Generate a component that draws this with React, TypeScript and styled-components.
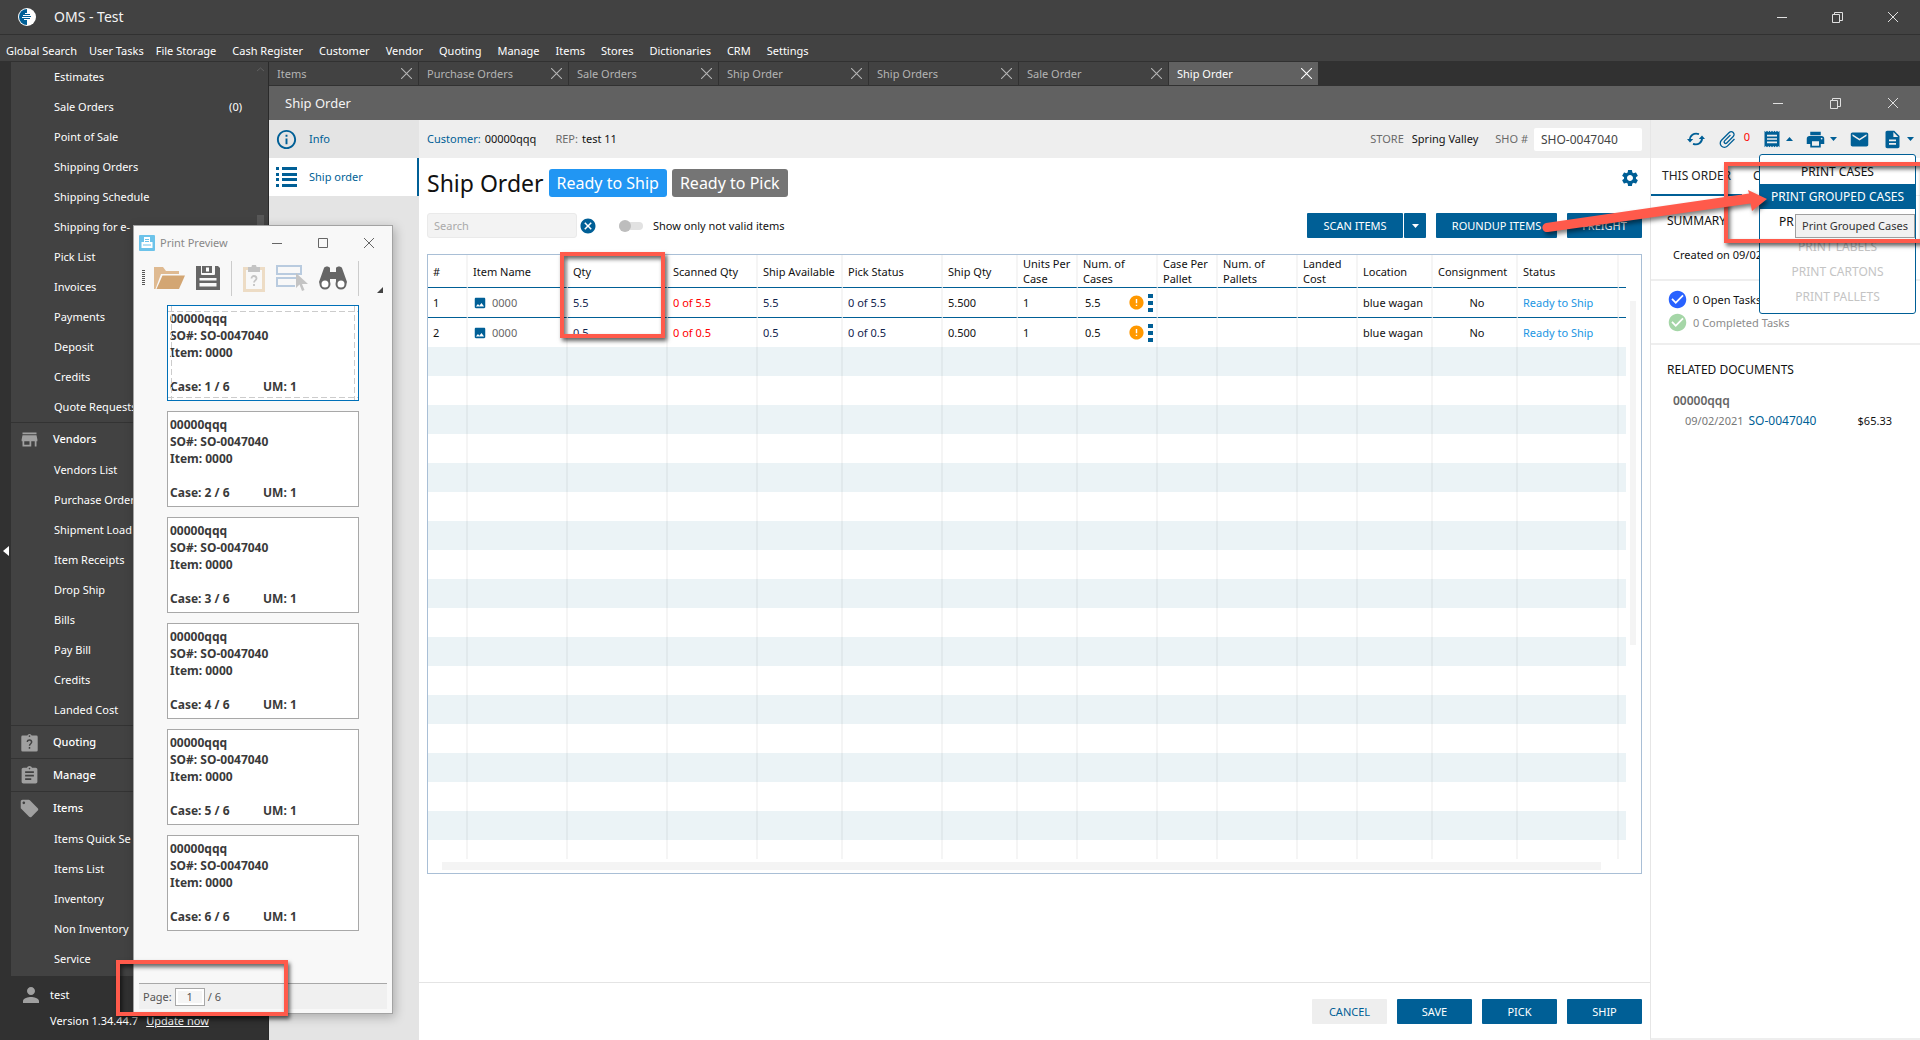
import React from "react";
import styled, { createGlobalStyle, css } from "styled-components";
import {
  MdStore,
  MdAssignment,
  MdPerson,
  MdSettings,
  MdReceipt,
  MdPrint,
  MdEmail,
  MdDescription,
  MdLocalOffer,
  MdImage,
  MdError,
  MdCheckCircle,
  MdOutlineInfo,
  MdAttachFile,
  MdCancel,
} from "react-icons/md";

const blue = "#005f96";
const red = "#ff5a4b";

const GlobalStyle = createGlobalStyle`
  * { box-sizing: border-box; }
  body {
    margin: 0;
    background: #313131;
    font-family: "Noto Sans", "Open Sans", sans-serif;
    font-size: 11px;
    line-height: 16px;
    color: #111;
  }
  button, input { font: inherit; color: inherit; margin: 0; }
  button { background: none; border: 0; padding: 0; cursor: pointer; }
  a { color: inherit; text-decoration: none; }
  ul { list-style: none; margin: 0; padding: 0; }
  h1, h2, p { margin: 0; font-weight: 400; }
  svg { display: block; flex: none; }
`;

/* ---------- shell ---------- */

const Page = styled.div`
  position: relative;
  display: flex;
  flex-direction: column;
  height: 100vh;
  overflow: hidden;
`;

const TitleBar = styled.header`
  display: flex;
  align-items: center;
  flex: none;
  height: 35px;
  padding: 0 22px 0 17px;
  gap: 17px;
  background: #424242;
  border-bottom: 1px solid #313131;
  color: #f4f4f4;
  font-size: 14px;
`;

const WindowControls = styled.div<{ $gap: number; $color: string }>`
  display: flex;
  align-items: center;
  gap: ${(p) => p.$gap}px;
  margin-left: auto;
  color: ${(p) => p.$color};
`;

const IconButton = styled.button`
  display: flex;
  align-items: center;
  justify-content: center;
`;

const MenuBar = styled.nav`
  display: flex;
  align-items: center;
  flex: none;
  height: 27px;
  padding: 6px 6px 0;
  gap: 16px;
  background: #424242;
  border-bottom: 1px solid #313131;
  color: #fff;
`;

const MenuItem = styled.a<{ $tight?: boolean }>`
  margin-right: ${(p) => (p.$tight ? "-4px" : "0")};
`;

const Body = styled.div`
  display: flex;
  flex: 1;
  min-height: 0;
`;

const CollapseStrip = styled.button`
  display: flex;
  align-items: center;
  justify-content: center;
  width: 11px;
  background: #313131;
`;

const Sidebar = styled.aside`
  display: flex;
  flex-direction: column;
  width: 258px;
  flex: none;
  background: #313131;
  border-right: 1px solid #2a2a2a;
  color: #fff;
`;

const SideScroll = styled.nav`
  position: relative;
  background: #424242;
  padding-bottom: 2px;
`;

const SideLink = styled.a`
  display: flex;
  align-items: center;
  justify-content: space-between;
  height: 30px;
  padding: 0 26px 0 43px;
`;

const SideGroup = styled.a`
  display: flex;
  align-items: center;
  gap: 13px;
  height: 33px;
  padding-left: 8px;
  border-top: 1px solid #333;
  font-weight: 500;
  svg { color: #a0a0a0; }
`;

const SideThumb = styled.i`
  position: absolute;
  right: 4px;
  top: 153px;
  width: 7px;
  height: 120px;
  background: #575757;
`;

const SideArrow = styled.svg`
  position: absolute;
  right: 4px;
  top: 5px;
`;

const UserArea = styled.div`
  display: grid;
  grid-template-columns: 22px 1fr;
  column-gap: 9px;
  row-gap: 2px;
  align-items: center;
  padding: 7px 8px 0;
  svg { color: #a0a0a0; }
`;

const VersionLine = styled.div`
  grid-column: 2;
  display: flex;
  gap: 8px;
  line-height: 24px;
  a { text-decoration: underline; }
`;

const Workspace = styled.div`
  display: flex;
  flex-direction: column;
  flex: 1;
  min-width: 0;
`;

const TabStrip = styled.div`
  display: flex;
  height: 24px;
  flex: none;
  background: #313131;
  border-bottom: 1px solid #313131;
`;

const DocTab = styled.div<{ $active?: boolean }>`
  display: flex;
  align-items: center;
  justify-content: space-between;
  width: 150px;
  padding: 0 6px 0 8px;
  border-right: 1px solid #313131;
  background: ${(p) => (p.$active ? "#616161" : "#424242")};
  color: ${(p) => (p.$active ? "#fff" : "#b4b4b4")};
`;

const DocTitle = styled.div`
  display: flex;
  align-items: center;
  flex: none;
  height: 34px;
  padding: 0 22px 0 16px;
  background: #616161;
  color: #f4f4f4;
  font-size: 13px;
`;

const Content = styled.div`
  display: grid;
  grid-template-columns: 150px minmax(0, 1fr) 270px;
  flex: 1;
  min-height: 0;
`;

const Sections = styled.nav`
  background: #e4e4e4;
`;

const SectionLink = styled.a<{ $active?: boolean }>`
  display: flex;
  align-items: center;
  gap: 11px;
  height: 38px;
  padding-left: 6px;
  color: ${blue};
  ${(p) => p.$active && css`
    background: #fff;
    border-right: 2px solid ${blue};
  `}
`;

/* ---------- main form ---------- */

const Main = styled.main`
  display: flex;
  flex-direction: column;
  background: #fff;
`;

const InfoBar = styled.div`
  display: flex;
  align-items: center;
  flex: none;
  height: 38px;
  padding: 0 8px;
  background: #eee;
`;

const Pair = styled.div<{ $blue?: boolean }>`
  display: flex;
  gap: 4px;
  margin-right: 19px;
  span { color: ${(p) => (p.$blue ? blue : "#6a6a6a")}; }
`;

const StorePair = styled(Pair)`
  gap: 8px;
  margin: 0 17px 0 auto;
`;

const NumberField = styled.label`
  display: flex;
  align-items: center;
  gap: 6px;
  color: #6a6a6a;
  input {
    width: 108px;
    height: 23px;
    padding: 0 7px;
    border: 0;
    border-radius: 2px;
    background: #fff;
    font-size: 12px;
    color: #444;
  }
`;

const HeadingRow = styled.div`
  display: flex;
  align-items: center;
  height: 50px;
  padding: 0 10px 0 8px;
  gap: 5px;
  button { margin-left: auto; color: ${blue}; align-self: flex-start; margin-top: 10px; }
`;

const Heading = styled.h1`
  font-size: 23px;
  line-height: 32px;
`;

const Badge = styled.span<{ $color: string }>`
  padding: 0 8px;
  border-radius: 3px;
  background: ${(p) => p.$color};
  color: #fff;
  font-size: 16px;
  line-height: 28px;
`;

const ToolRow = styled.div`
  display: flex;
  align-items: center;
  height: 25px;
  margin: 5px 8px 16px;
`;

const SearchBox = styled.input`
  width: 150px;
  height: 25px;
  padding: 0 6px;
  border: 1px solid #eaeaea;
  border-radius: 3px;
  background: #f3f3f3;
  &::placeholder { color: #aaa; }
`;

const ClearButton = styled(IconButton)`
  margin: 0 22px 0 2px;
  color: ${blue};
`;

const SwitchLabel = styled.label`
  display: flex;
  align-items: center;
  gap: 10px;
  input {
    appearance: none;
    position: relative;
    width: 24px;
    height: 8px;
    border-radius: 4px;
    background: #e2e2e2;
  }
  input::before {
    content: "";
    position: absolute;
    left: 0;
    top: -2px;
    width: 12px;
    height: 12px;
    border-radius: 50%;
    background: #bdbdbd;
  }
`;

const ActionGroup = styled.div`
  display: flex;
  gap: 10px;
  margin-left: auto;
`;

const SplitButton = styled.div`
  display: flex;
  gap: 1px;
`;

const Button = styled.button<{ $width: number; $plain?: boolean }>`
  display: flex;
  align-items: center;
  justify-content: center;
  width: ${(p) => p.$width}px;
  height: 25px;
  border-radius: 1px;
  background: ${(p) => (p.$plain ? "#eee" : blue)};
  color: ${(p) => (p.$plain ? blue : "#fff")};
`;

const GridFrame = styled.section`
  display: flex;
  flex-direction: column;
  margin: 0 8px;
  height: 620px;
  border: 1px solid #a9bfd6;
`;

const GridArea = styled.div`
  display: flex;
  flex: 1;
  min-height: 0;
  overflow: hidden;
`;

const Grid = styled.table`
  flex: 1;
  table-layout: fixed;
  border-spacing: 0;
  th, td {
    padding: 0 0 0 5px;
    border-right: 2px solid rgba(0, 0, 0, 0.04);
    text-align: left;
    font-weight: 400;
    white-space: nowrap;
  }
  th { height: 33px; line-height: 15px; border-bottom: 1px solid ${blue}; }
  th:last-child, td:last-child { border-right: 0; padding: 0; }
`;

const Row = styled.tr<{ $selected?: boolean; $striped?: boolean }>`
  background: ${(p) => (p.$striped ? "#ebf3f6" : "#fff")};
  td {
    height: ${(p) => (p.$selected ? 30 : 29)}px;
    border-bottom: ${(p) => (p.$selected ? `1px solid ${blue}` : "0")};
  }
`;

const Value = styled.span<{ $tone?: string }>`
  color: ${(p) => p.$tone || "#111"};
`;

const ItemCell = styled.span`
  display: flex;
  align-items: center;
  gap: 5px;
  color: #666;
  svg { color: ${blue}; }
`;

const CasesCell = styled.span`
  display: flex;
  align-items: center;
  gap: 3px;
  padding: 0 3px 0 2px;
  svg:first-of-type { margin-left: auto; }
`;

const Centered = styled.span`
  display: block;
  text-align: center;
`;

const VScroll = styled.div`
  width: 15px;
  padding: 46px 5px 0 4px;
  i { display: block; height: 344px; background: #f4f4f4; }
`;

const HScroll = styled.div`
  flex: none;
  height: 14px;
  padding: 3px 40px 0 14px;
  i { display: block; height: 8px; background: #f4f4f4; }
`;

const Footer = styled.footer`
  display: flex;
  justify-content: flex-end;
  align-items: center;
  gap: 10px;
  height: 58px;
  margin-top: auto;
  padding: 0 8px;
  border-top: 1px solid #e4e4e4;
`;

/* ---------- right panel ---------- */

const Panel = styled.aside`
  display: flex;
  flex-direction: column;
  background: #fff;
  border-left: 1px solid #e6e6e6;
  border-bottom: 2px solid #eee;
`;

const PanelTools = styled.div`
  display: flex;
  align-items: center;
  justify-content: flex-end;
  height: 38px;
  flex: none;
  padding-right: 6px;
  gap: 12px;
  background: #eee;
  color: ${blue};
`;

const ToolButton = styled(IconButton)`
  gap: 4px;
  height: 38px;
  sup { color: #f00; font-size: 11px; line-height: 16px; align-self: flex-start; margin: 9px 0 0 2px; }
`;

const MenuHost = styled.div`
  position: relative;
`;

const DropMenu = styled.ul`
  position: absolute;
  left: -3px;
  top: 34px;
  z-index: 5;
  width: 157px;
  padding: 4px 0;
  border: 1px solid ${blue};
  border-radius: 3px;
  background: #fff;
`;

const DropItem = styled.button<{ $active?: boolean; $left?: boolean }>`
  display: block;
  width: 100%;
  height: 25px;
  padding: ${(p) => (p.$left ? "0 19px" : "0")};
  text-align: ${(p) => (p.$left ? "left" : "center")};
  font-size: 12px;
  color: ${(p) => (p.$active ? "#fff" : "#111")};
  background: ${(p) => (p.$active ? blue : "none")};
  &:disabled { color: #c4c4c4; }
`;

const Tooltip = styled.li`
  position: absolute;
  right: 0;
  top: 59px;
  padding: 3px 6px;
  border: 1px solid #a0a0a0;
  background: #f1f1f1;
  white-space: nowrap;
  color: #333;
`;

const PanelTabs = styled.div`
  display: flex;
  height: 38px;
  flex: none;
  border-bottom: 1px solid #eee;
`;

const PanelTab = styled.button<{ $active?: boolean }>`
  height: 38px;
  padding: 0 11px;
  font-size: 12px;
  color: #222;
  border-bottom: 2px solid ${(p) => (p.$active ? blue : "transparent")};
`;

const Block = styled.section<{ $pad: string }>`
  padding: ${(p) => p.$pad};
  border-bottom: 2px solid #eee;
  &:last-child { border-bottom: 0; }
`;

const BlockTitle = styled.h2`
  font-size: 12px;
  line-height: 18px;
`;

const Created = styled.p`
  padding: 16px 0 0 6px;
  line-height: 18px;
`;

const Task = styled.div<{ $tone: string; $muted?: boolean }>`
  display: flex;
  align-items: center;
  gap: 5px;
  height: 23px;
  color: ${(p) => (p.$muted ? "#8c8c8c" : "#111")};
  svg { color: ${(p) => p.$tone}; }
`;

const DocOwner = styled.p`
  padding: 13px 0 2px 6px;
  font-size: 12px;
  font-weight: 600;
  line-height: 18px;
  color: #666;
`;

const DocLine = styled.div`
  display: flex;
  gap: 5px;
  padding: 0 28px 0 18px;
  line-height: 18px;
  span:first-child { color: #777; }
  a { color: ${blue}; font-size: 12px; }
  span:last-child { margin-left: auto; }
`;

/* ---------- print preview window ---------- */

const Preview = styled.div`
  position: absolute;
  left: 133px;
  top: 225px;
  z-index: 10;
  display: flex;
  flex-direction: column;
  width: 260px;
  height: 789px;
  border: 1px solid #a3a3a3;
  background: #f8f8f8;
  box-shadow: 2px 3px 10px rgba(0, 0, 0, 0.25);
`;

const PreviewTitle = styled.div`
  display: flex;
  align-items: center;
  height: 34px;
  padding: 0 18px 0 5px;
  gap: 5px;
  color: #888;
`;

const PreviewTools = styled.div`
  display: flex;
  align-items: center;
  height: 36px;
  padding-left: 8px;
  gap: 11px;
`;

const ToolSep = styled.i`
  width: 1px;
  height: 35px;
  background: #ccc;
`;

const Grip = styled.i`
  width: 3px;
  height: 16px;
  margin-right: -2px;
  background: repeating-linear-gradient(#555 0 1px, transparent 1px 2px);
`;

const Corner = styled.i`
  width: 0;
  margin-top: 23px;
  margin-left: auto;
  margin-right: 9px;
  border-left: 6px solid transparent;
  border-bottom: 6px solid #444;
`;

const Cards = styled.div`
  display: flex;
  flex-direction: column;
  gap: 10px;
  padding: 9px 33px 0 33px;
`;

const Card = styled.article<{ $selected?: boolean }>`
  position: relative;
  height: 96px;
  padding: 4px 2px;
  border: 1px solid ${(p) => (p.$selected ? "#0070b8" : "#a8a8a8")};
  background: #fff;
  font-size: 12px;
  font-weight: 700;
  line-height: 17px;
  color: #3a3a3a;
`;

const CardFoot = styled.div`
  display: grid;
  grid-template-columns: 93px 1fr;
  margin-top: 17px;
`;

const MarginOverlay = styled.svg`
  position: absolute;
  inset: 0;
`;

const StatusBar = styled.label`
  display: flex;
  align-items: center;
  gap: 3px;
  height: 26px;
  margin: auto 5px 4px;
  padding-left: 4px;
  border-top: 1px solid #a8a8a8;
  background: #f0f0f0;
  color: #555;
  input {
    width: 30px;
    height: 18px;
    padding: 0;
    border: 1px solid #a8a8a8;
    background: #f5f5f5;
    box-shadow: inset 0 0 0 2px #fff;
    text-align: center;
  }
`;

/* ---------- annotations ---------- */

const Marker = styled.div<{ $x: number; $y: number; $w: number; $h: number }>`
  position: absolute;
  left: ${(p) => p.$x}px;
  top: ${(p) => p.$y}px;
  z-index: 20;
  width: ${(p) => p.$w}px;
  height: ${(p) => p.$h}px;
  border: 4px solid ${red};
  box-shadow: 2px 3px 4px rgba(0, 0, 0, 0.6), inset 2px 3px 4px rgba(0, 0, 0, 0.6);
  pointer-events: none;
`;

const ArrowMark = styled.svg`
  position: absolute;
  left: 1540px;
  top: 184px;
  z-index: 21;
  filter: drop-shadow(2px 3px 2px rgba(0, 0, 0, 0.5));
  pointer-events: none;
`;

/* ---------- drawings ---------- */

const Cross = ({ size = 10 }: { size?: number }) => (
  <svg width={size} height={size} viewBox="0 0 10 10" fill="none" stroke="currentColor">
    <path d="M0 0 10 10M10 0 0 10" />
  </svg>
);
const Dash = () => (
  <svg width="10" height="10" viewBox="0 0 10 10"><path d="M0 5.5h10" stroke="currentColor" /></svg>
);
const Restore = () => (
  <svg width="11" height="11" viewBox="0 0 11 11" fill="none" stroke="currentColor">
    <path d="M.5 2.5h7v8h-7zM2.5 2.500V.5h8v8h-2.500" />
  </svg>
);
const Square = () => (
  <svg width="10" height="10" viewBox="0 0 10 10"><path d="M.5.5h9v9h-9z" fill="none" stroke="currentColor" /></svg>
);
const Caret = ({ up }: { up?: boolean }) => (
  <svg width="7" height="4" viewBox="0 0 7 4" fill="currentColor">
    <path d={up ? "M0 4 3.500 0 7 4z" : "M0 0h7L3.500 4z"} />
  </svg>
);
const Logo = () => (
  <svg width="20" height="20" viewBox="0 0 20 20">
    <circle cx="10" cy="10" r="9" fill="#fff" />
    <path d="M10 2a8 8 0 0 0 0 16z" fill={blue} />
    <path d="M6 8.500h4M5 10.500h5M7 12.500h3M8 6.500h2" stroke="#fff" />
    <path d="M10 7.500h3M10 9.500h4M10 11.500h3" stroke={blue} />
  </svg>
);
const ListIcon = () => (
  <svg width="23" height="20" viewBox="0 0 23 20" fill={blue}>
    {[0, 6, 11, 17].map((y) => (
      <path key={y} d={`M1 ${y}h3v3H1zM7 ${y}h15v3H7z`} />
    ))}
  </svg>
);
const ClipQuestion = ({ size, width, board, ink }: { size: number; width: number; board: string; ink: string }) => (
  <svg width={width} height={size} viewBox="0 0 20 22">
    <path d="M2 3h5.500a2.600 2.600 0 0 1 5 0H18a1.500 1.500 0 0 1 1.500 1.500V20a1.500 1.500 0 0 1-1.500 1.500H2A1.500 1.500 0 0 1 .5 20V4.500A1.500 1.500 0 0 1 2 3z" fill={board} />
    <circle cx="10" cy="3.500" r="1" fill={ink} />
    <path d="M7.500 10.500c0-3.500 5-3.200 5 0 0 1.800-2.500 2-2.500 4.200M10 16.200v2" fill="none" stroke={ink} strokeWidth="1.700" />
  </svg>
);
const Refresh = () => (
  <svg width="18" height="16" viewBox="0 0 18 16" fill="none" stroke="currentColor" strokeWidth="1.800">
    <path d="M3 9.500C2.500 4.500 7 1.500 12 3.200M15 6.500c.5 5-4 8-9 6.300" />
    <path d="M0 8h6.200L3 11.500zM18 8h-6.200L15 4.500z" fill="currentColor" stroke="none" />
  </svg>
);
const Dots = () => (
  <svg width="5" height="18" viewBox="0 0 5 18" fill={blue}><path d="M0 0h5v4H0zM0 7h5v4H0zM0 14h5v4H0z" /></svg>
);
const PreviewLogo = () => (
  <svg width="16" height="16" viewBox="0 0 16 16">
    <rect width="16" height="16" rx="1" fill="#6cc3ea" />
    <path d="M5 2h6v5h2.500v6h-11V7H5z" fill="#fff" />
    <path d="M6 4.500h4M6 6.500h4M4 10h8" stroke="#6cc3ea" />
  </svg>
);
const Folder = () => (
  <svg width="31" height="23" viewBox="0 0 31 23">
    <path d="M0 0h9l3 4h13v3H7L1.500 22H0z" fill="#dfba91" />
    <path d="M8.500 8.500H31L25 22H2.500z" fill="#d3a673" />
  </svg>
);
const Floppy = () => (
  <svg width="24" height="24" viewBox="0 0 24 24">
    <path d="M0 0h5v8h14V0h3l2 2v22H0z" fill="#666" />
    <path d="M6 0h10v7H6z" fill="#666" /><path d="M10 1.500h3v4h-3z" fill="#fff" />
    <path d="M3.500 12h17v2.500h-17zM3.500 17h17v3.500h-17z" fill="#f8f8f8" />
    <path d="M5.500 0v8.500h13V0" fill="none" stroke="#f8f8f8" />
  </svg>
);
const ClipDisabled = () => (
  <svg width="22" height="27" viewBox="0 0 22 27" fill="none">
    <path d="M1.500 3.500h19v22h-19z" stroke="#eddcc5" strokeWidth="3" />
    <path d="M5 2h3.500a2.500 2.500 0 0 1 5 0H17v5H5z" fill="#c4c4c4" />
    <path d="M8.500 13.500c0-3.500 5-3.200 5 0 0 1.800-2.500 2-2.500 4M11 19v2" stroke="#c4c4c4" strokeWidth="1.800" />
  </svg>
);
const SelectDisabled = () => (
  <svg width="32" height="26" viewBox="0 0 32 26">
    <path d="M1 1h24v8H1zM22 13H1v8h18" fill="none" stroke="#b9cbdf" strokeWidth="2" />
    <path d="M20 8v15l3.500-3.500L26 26l2.500-1-2.500-6h6z" fill="#c4c4c4" />
  </svg>
);
const Binoculars = () => (
  <svg width="28" height="24" viewBox="0 0 28 24">
    <path d="M5 2c1-2 5-2 6 0v4h6V2c1-2 5-2 6 0l5 14a6 6 0 0 1-11 1v-4h-6v4a6 6 0 0 1-11-1z" fill="#666" />
    <circle cx="6" cy="18" r="4.500" fill="#fff" stroke="#666" strokeWidth="2" />
    <circle cx="22" cy="18" r="4.500" fill="#fff" stroke="#666" strokeWidth="2" />
  </svg>
);
const MarginLines = () => (
  <MarginOverlay width="190" height="94" viewBox="0 0 190 94" fill="none" stroke="#ccc" strokeDasharray="6 3">
    <path d="M3.500 0v94M186.500 0v94M0 5.500h190M0 91.500h190" />
  </MarginOverlay>
);

/* ---------- data ---------- */

const menus = ["Global Search", "User Tasks", "File Storage", "Cash Register", "Customer", "Vendor", "Quoting", "Manage", "Items", "Stores", "Dictionaries", "CRM", "Settings"];
const tabs = ["Items", "Purchase Orders", "Sale Orders", "Ship Order", "Ship Orders", "Sale Order", "Ship Order"];
const salesLinks = ["Estimates", "Sale Orders", "Point of Sale", "Shipping Orders", "Shipping Schedule", "Shipping for e-", "Pick List", "Invoices", "Payments", "Deposit", "Credits", "Quote Requests"];
const vendorLinks = ["Vendors List", "Purchase Orders", "Shipment Load", "Item Receipts", "Drop Ship", "Bills", "Pay Bill", "Credits", "Landed Cost"];
const itemLinks = ["Items Quick Se", "Items List", "Inventory", "Non Inventory", "Service"];

const columns: [string, number | undefined][] = [
  ["#", 40], ["Item Name", 100], ["Qty", 100], ["Scanned Qty", 90], ["Ship Available", 85],
  ["Pick Status", 100], ["Ship Qty", 75], ["Units Per\nCase", 60], ["Num. of\nCases", 80],
  ["Case Per\nPallet", 60], ["Num. of\nPallets", 80], ["Landed\nCost", 60], ["Location", 75],
  ["Consignment", 85], ["Status", 101], ["", undefined],
];
const lines = [
  { n: 1, qty: "5.5", ship: "5.500", selected: true },
  { n: 2, qty: "0.5", ship: "0.500", selected: false },
];
const fillers = Array.from({ length: 18 }, (_, i) => i);
const navy = "#12244e";

export default function App() {
  return (
    <>
      <GlobalStyle />
      <Page>
        <TitleBar>
          <Logo />
          OMS - Test
          <WindowControls $gap={45} $color="#e0e0e0">
            <IconButton aria-label="Minimize"><Dash /></IconButton>
            <IconButton aria-label="Restore"><Restore /></IconButton>
            <IconButton aria-label="Close"><Cross /></IconButton>
          </WindowControls>
        </TitleBar>
        <MenuBar>
          {menus.map((m, i) => <MenuItem href="#" key={m} $tight={i < 2}>{m}</MenuItem>)}
        </MenuBar>
        <Body>
          <CollapseStrip aria-label="Collapse sidebar">
            <svg width="6" height="10" viewBox="0 0 6 10" fill="#fff"><path d="M6 0v10L0 5z" /></svg>
          </CollapseStrip>
          <Sidebar>
            <SideScroll>
              {salesLinks.map((t) => (
                <SideLink href="#" key={t}>{t}{t === "Sale Orders" && <span>(0)</span>}</SideLink>
              ))}
              <SideGroup href="#"><MdStore size={21} />Vendors</SideGroup>
              {vendorLinks.map((t) => <SideLink href="#" key={t}>{t}</SideLink>)}
              <SideGroup href="#"><ClipQuestion size={19} width={21} board="#a0a0a0" ink="#424242" />Quoting</SideGroup>
              <SideGroup href="#"><MdAssignment size={21} />Manage</SideGroup>
              <SideGroup href="#"><MdLocalOffer size={21} />Items</SideGroup>
              {itemLinks.map((t) => <SideLink href="#" key={t}>{t}</SideLink>)}
              <SideThumb />
              <SideArrow width="7" height="5" viewBox="0 0 7 5" fill="none" stroke="#606060">
                <path d="M0 4 3.500 1 7 4" />
              </SideArrow>
            </SideScroll>
            <UserArea>
              <MdPerson size={24} />
              <span>test</span>
              <VersionLine><span>Version 1.34.44.7</span><a href="#">Update now</a></VersionLine>
            </UserArea>
          </Sidebar>
          <Workspace>
            <TabStrip>
              {tabs.map((t, i) => (
                <DocTab key={i} $active={i === tabs.length - 1}>
                  {t}
                  <IconButton aria-label={`Close ${t}`}><Cross size={11} /></IconButton>
                </DocTab>
              ))}
            </TabStrip>
            <DocTitle>
              Ship Order
              <WindowControls $gap={47} $color="#e0e0e0">
                <IconButton aria-label="Minimize"><Dash /></IconButton>
                <IconButton aria-label="Restore"><Restore /></IconButton>
                <IconButton aria-label="Close"><Cross /></IconButton>
              </WindowControls>
            </DocTitle>
            <Content>
              <Sections>
                <SectionLink href="#"><MdOutlineInfo size={23} />Info</SectionLink>
                <SectionLink href="#" $active><ListIcon />Ship order</SectionLink>
              </Sections>
              <Main>
                <InfoBar>
                  <Pair $blue><span>Customer:</span>00000qqq</Pair>
                  <Pair><span>REP:</span>test 11</Pair>
                  <StorePair><span>STORE</span>Spring Valley</StorePair>
                  <NumberField>SHO #<input defaultValue="SHO-0047040" /></NumberField>
                </InfoBar>
                <HeadingRow>
                  <Heading>Ship Order</Heading>
                  <Badge $color="#2196f3">Ready to Ship</Badge>
                  <Badge $color="#757575">Ready to Pick</Badge>
                  <IconButton aria-label="Settings"><MdSettings size={20} /></IconButton>
                </HeadingRow>
                <ToolRow>
                  <SearchBox placeholder="Search" aria-label="Search" />
                  <ClearButton aria-label="Clear search"><MdCancel size={18} /></ClearButton>
                  <SwitchLabel><input type="checkbox" />Show only not valid items</SwitchLabel>
                  <ActionGroup>
                    <SplitButton>
                      <Button $width={96}>SCAN ITEMS</Button>
                      <Button $width={22} aria-label="More scan actions"><Caret /></Button>
                    </SplitButton>
                    <Button $width={121}>ROUNDUP ITEMS</Button>
                    <Button $width={75}>FREIGHT</Button>
                  </ActionGroup>
                </ToolRow>
                <GridFrame>
                  <GridArea>
                    <Grid>
                      <colgroup>{columns.map(([, w], i) => <col key={i} width={w} />)}</colgroup>
                      <thead>
                        <tr>
                          {columns.map(([label], i) => (
                            <th key={i}>{label.split("\n").map((part) => <div key={part}>{part}</div>)}</th>
                          ))}
                        </tr>
                      </thead>
                      <tbody>
                        {lines.map((l) => (
                          <Row key={l.n} $selected={l.selected}>
                            <td>{l.n}</td>
                            <td><ItemCell><MdImage size={14} />0000</ItemCell></td>
                            <td><Value $tone={navy}>{l.qty}</Value></td>
                            <td><Value $tone="#f00">0 of {l.qty}</Value></td>
                            <td><Value $tone={navy}>{l.qty}</Value></td>
                            <td><Value $tone={navy}>0 of {l.qty}</Value></td>
                            <td><Value>{l.ship}</Value></td>
                            <td>1</td>
                            <td><CasesCell>{l.qty}<MdError size={17} color="#ff9800" /><Dots /></CasesCell></td>
                            <td /><td /><td />
                            <td>blue wagan</td>
                            <td><Centered>No</Centered></td>
                            <td><Value $tone="#2196e3">Ready to Ship</Value></td>
                            <td />
                          </Row>
                        ))}
                        {fillers.map((i) => (
                          <Row key={i} $striped={i % 2 === 0}>
                            {columns.map((_, c) => <td key={c} />)}
                          </Row>
                        ))}
                      </tbody>
                    </Grid>
                    <VScroll><i /></VScroll>
                  </GridArea>
                  <HScroll><i /></HScroll>
                </GridFrame>
                <Footer>
                  <Button $width={75} $plain>CANCEL</Button>
                  <Button $width={75}>SAVE</Button>
                  <Button $width={75}>PICK</Button>
                  <Button $width={75}>SHIP</Button>
                </Footer>
              </Main>
              <Panel>
                <PanelTools>
                  <ToolButton aria-label="Refresh"><Refresh /></ToolButton>
                  <ToolButton aria-label="Attachments">
                    <MdAttachFile size={21} transform="rotate(45)" /><sup>0</sup>
                  </ToolButton>
                  <MenuHost>
                    <ToolButton aria-label="Print labels menu"><MdReceipt size={20} /><Caret up /></ToolButton>
                    <DropMenu>
                      <li><DropItem>PRINT CASES</DropItem></li>
                      <li><DropItem $active>PRINT GROUPED CASES</DropItem></li>
                      <li><DropItem $left>PR</DropItem></li>
                      <li><DropItem disabled>PRINT LABELS</DropItem></li>
                      <li><DropItem disabled>PRINT CARTONS</DropItem></li>
                      <li><DropItem disabled>PRINT PALLETS</DropItem></li>
                      <Tooltip role="tooltip">Print Grouped Cases</Tooltip>
                    </DropMenu>
                  </MenuHost>
                  <ToolButton aria-label="Print"><MdPrint size={21} /><Caret /></ToolButton>
                  <ToolButton aria-label="Email"><MdEmail size={21} /></ToolButton>
                  <ToolButton aria-label="Documents"><MdDescription size={21} /><Caret /></ToolButton>
                </PanelTools>
                <PanelTabs>
                  <PanelTab $active>THIS ORDER</PanelTab>
                  <PanelTab>C</PanelTab>
                </PanelTabs>
                <Block $pad="16px 16px 15px">
                  <BlockTitle>SUMMARY</BlockTitle>
                  <Created>Created on 09/02</Created>
                </Block>
                <Block $pad="7px 16px 9px">
                  <Task $tone="#2962ff"><MdCheckCircle size={21} />0 Open Tasks</Task>
                  <Task $tone="#a5d6a7" $muted><MdCheckCircle size={21} />0 Completed Tasks</Task>
                </Block>
                <Block $pad="16px 0 0 16px">
                  <BlockTitle>RELATED DOCUMENTS</BlockTitle>
                  <DocOwner>00000qqq</DocOwner>
                  <DocLine><span>09/02/2021</span><a href="#">SO-0047040</a><span>$65.33</span></DocLine>
                </Block>
              </Panel>
            </Content>
          </Workspace>
        </Body>

        <Preview>
          <PreviewTitle>
            <PreviewLogo />
            Print Preview
            <WindowControls $gap={36} $color="#666">
              <IconButton aria-label="Minimize"><Dash /></IconButton>
              <IconButton aria-label="Maximize"><Square /></IconButton>
              <IconButton aria-label="Close"><Cross /></IconButton>
            </WindowControls>
          </PreviewTitle>
          <PreviewTools>
            <Grip />
            <IconButton aria-label="Open"><Folder /></IconButton>
            <IconButton aria-label="Save"><Floppy /></IconButton>
            <ToolSep />
            <IconButton aria-label="Paste" disabled><ClipDisabled /></IconButton>
            <IconButton aria-label="Select" disabled><SelectDisabled /></IconButton>
            <IconButton aria-label="Find"><Binoculars /></IconButton>
            <ToolSep />
            <Corner />
          </PreviewTools>
          <Cards>
            {[1, 2, 3, 4, 5, 6].map((n) => (
              <Card key={n} $selected={n === 1}>
                <div>00000qqq</div>
                <div>SO#: SO-0047040</div>
                <div>Item: 0000</div>
                <CardFoot><span>Case: {n} / 6</span><span>UM: 1</span></CardFoot>
                {n === 1 && <MarginLines />}
              </Card>
            ))}
          </Cards>
          <StatusBar>Page:<input defaultValue="1" />/ 6</StatusBar>
        </Preview>

        <Marker $x={560} $y={252} $w={105} $h={86} />
        <Marker $x={116} $y={960} $w={172} $h={56} />
        <Marker $x={1724} $y={162} $w={200} $h={81} />
        <ArrowMark width="232" height="54" viewBox="0 0 232 54">
          <path d="M6 39 209 9.500 208 6 227 15 212 27 210.500 19.500 8 48a4.500 4.500 0 0 1-2-9z" fill={red} />
        </ArrowMark>
      </Page>
    </>
  );
}
